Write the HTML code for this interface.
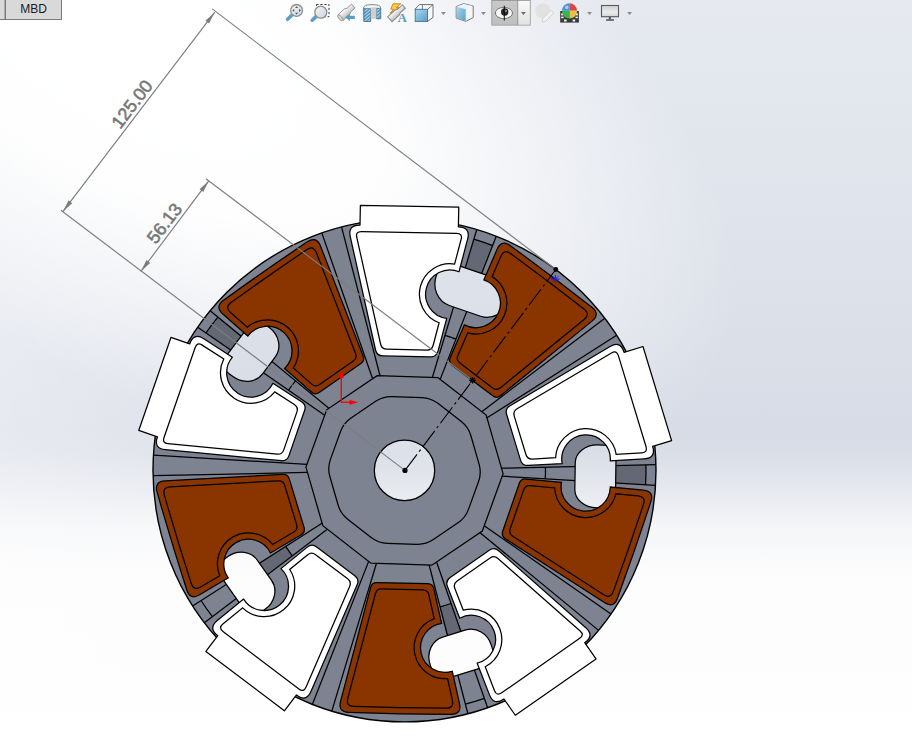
<!DOCTYPE html>
<html><head><meta charset="utf-8"><style>
html,body{margin:0;padding:0;width:912px;height:755px;overflow:hidden;background:#fff}
svg{display:block}
</style></head><body>
<svg width="912" height="755" viewBox="0 0 912 755" font-family="Liberation Sans, sans-serif">
<defs>
  <linearGradient id="bg1" gradientUnits="userSpaceOnUse" x1="0" y1="0" x2="0" y2="755">
    <stop offset="0" stop-color="#e6e9f0"/>
    <stop offset="0.3" stop-color="#dfe3eb"/>
    <stop offset="0.57" stop-color="#d8dce6"/>
    <stop offset="0.6" stop-color="#dadee7"/>
    <stop offset="0.65" stop-color="#e7e9ef"/>
    <stop offset="0.7" stop-color="#f5f6f8"/>
    <stop offset="0.76" stop-color="#fcfcfd"/>
    <stop offset="1" stop-color="#ffffff"/>
  </linearGradient>
  <linearGradient id="bg3" gradientUnits="userSpaceOnUse" x1="0" y1="0" x2="380" y2="0">
    <stop offset="0" stop-color="#ffffff" stop-opacity="0.38"/>
    <stop offset="1" stop-color="#ffffff" stop-opacity="0"/>
  </linearGradient>
  <radialGradient id="bg2" gradientUnits="userSpaceOnUse" cx="0" cy="0" r="1" gradientTransform="translate(140,50) rotate(29) scale(660,320)">
    <stop offset="0" stop-color="#ffffff" stop-opacity="1"/>
    <stop offset="0.4" stop-color="#ffffff" stop-opacity="0.97"/>
    <stop offset="0.66" stop-color="#ffffff" stop-opacity="0.55"/>
    <stop offset="1" stop-color="#ffffff" stop-opacity="0"/>
  </radialGradient>
  <radialGradient id="bg2h" gradientUnits="userSpaceOnUse" cx="0" cy="0" r="1" gradientTransform="translate(160,60) rotate(27) scale(640,270)">
    <stop offset="0" stop-color="#ffffff" stop-opacity="1"/>
    <stop offset="0.33" stop-color="#ffffff" stop-opacity="0.9"/>
    <stop offset="0.55" stop-color="#ffffff" stop-opacity="0"/>
  </radialGradient>
  <linearGradient id="holebg" x1="0" y1="0" x2="0" y2="1">
    <stop offset="0" stop-color="#e0e3eb"/><stop offset="1" stop-color="#e6e8ee"/>
  </linearGradient>
  <linearGradient id="holebg2" x1="0" y1="0" x2="0" y2="1">
    <stop offset="0" stop-color="#dfe2ea"/><stop offset="1" stop-color="#eef0f4"/>
  </linearGradient>
</defs>
<rect width="912" height="755" fill="url(#bg1)"/>
<rect width="912" height="755" fill="url(#bg2)"/>
<rect width="912" height="755" fill="url(#bg3)"/>

<defs><clipPath id="allrims"><path d="M-14.4,-211.3 L14.4,-211.3 L13.95,-205.9 A24.4,24.4 0 0 1 13.95,-157.1 L-13.95,-157.1 A24.4,24.4 0 0 1 -13.95,-205.9 Z" transform="translate(404.5,470.4) rotate(18.9)"/><path d="M-14.4,-211.3 L14.4,-211.3 L13.95,-205.9 A24.4,24.4 0 0 1 13.95,-157.1 L-13.95,-157.1 A24.4,24.4 0 0 1 -13.95,-205.9 Z" transform="translate(404.5,470.4) rotate(90.9)"/><path d="M-14.4,-211.3 L14.4,-211.3 L13.95,-205.9 A24.4,24.4 0 0 1 13.95,-157.1 L-13.95,-157.1 A24.4,24.4 0 0 1 -13.95,-205.9 Z" transform="translate(404.5,470.4) rotate(162.9)"/><path d="M-14.4,-211.3 L14.4,-211.3 L13.95,-205.9 A24.4,24.4 0 0 1 13.95,-157.1 L-13.95,-157.1 A24.4,24.4 0 0 1 -13.95,-205.9 Z" transform="translate(404.5,470.4) rotate(234.9)"/><path d="M-14.4,-211.3 L14.4,-211.3 L13.95,-205.9 A24.4,24.4 0 0 1 13.95,-157.1 L-13.95,-157.1 A24.4,24.4 0 0 1 -13.95,-205.9 Z" transform="translate(404.5,470.4) rotate(306.9)"/></clipPath><clipPath id="alllights"><path d="M-11,-220 L22,-220 A22,24 0 0 1 44,-196 L44,-194.5 A22,24 0 0 1 22,-170.5 L-11,-170.5 A22,24 0 0 1 -33,-194.5 L-33,-196 A22,24 0 0 1 -11,-220 Z" transform="translate(404.5,470.4) rotate(18.9)"/><path d="M-10.5,-220 L16.4,-220 A18,22 0 0 1 34.4,-198 L34.4,-192.6 A18,22 0 0 1 16.4,-170.6 L-10.5,-170.6 A18,22 0 0 1 -28.5,-192.6 L-28.5,-198 A18,22 0 0 1 -10.5,-220 Z" transform="translate(404.5,470.4) rotate(90.9)"/><path d="M-11.6,-220 L12.6,-220 A20,22 0 0 1 32.6,-198 L32.6,-192.5 A20,22 0 0 1 12.6,-170.5 L-11.6,-170.5 A20,22 0 0 1 -31.6,-192.5 L-31.6,-198 A20,22 0 0 1 -11.6,-220 Z" transform="translate(404.5,470.4) rotate(162.9)"/><path d="M-13.5,-220 L11,-220 A20,22 0 0 1 31,-198 L31,-194 A20,22 0 0 1 11,-172 L-13.5,-172 A20,22 0 0 1 -33.5,-194 L-33.5,-198 A20,22 0 0 1 -13.5,-220 Z" transform="translate(404.5,470.4) rotate(234.9)"/><path d="M-8,-220 L13,-220 A20,22 0 0 1 33,-198 L33,-193.5 A20,22 0 0 1 13,-171.5 L-8,-171.5 A20,22 0 0 1 -28,-193.5 L-28,-198 A20,22 0 0 1 -8,-220 Z" transform="translate(404.5,470.4) rotate(306.9)"/></clipPath><clipPath id="centerhole"><circle cx="404.5" cy="470.4" r="30.2"/></clipPath></defs>
<g transform="translate(404.5,470.4)">
  <defs>
    <clipPath id="rimclip"><path d="M-14.4,-211.3 L14.4,-211.3 L13.95,-205.9 A24.4,24.4 0 0 1 13.95,-157.1 L-13.95,-157.1 A24.4,24.4 0 0 1 -13.95,-205.9 Z"/></clipPath>
    <g id="unitA"><g stroke="#000" stroke-width="1.25" fill="none">
<line x1="26.22" y1="-93.91" x2="67.63" y2="-242.24"/><line x1="33.83" y1="-91.44" x2="87.25" y2="-235.88"/>
<line x1="-26.22" y1="-93.91" x2="-67.63" y2="-242.24"/><line x1="-33.83" y1="-91.44" x2="-87.25" y2="-235.88"/>
<path d="M64.94,-232.6 A241.5,241.5 0 0 1 83.78,-226.5" fill="none"/>
<path d="M37.92,-135.81 A141,141 0 0 1 48.92,-132.24" fill="none"/>
</g></g>
    <g id="unitB"><g transform="rotate(17.8)"><line x1="-14.4" y1="-211.3" x2="14.4" y2="-211.3" stroke="#000" stroke-width="1.25"/>
</g>
<path d="M-49.2,-264.2 L49.2,-264.2 L49.2,-244.4 Q61.56,-244.4 58.73,-232.74 L50.69,-199.69 A24.3,24.3 0 1 0 39.29,-152.85 L31.25,-119.83 Q29.84,-114 23.84,-114 L-23.84,-114 Q-29.84,-114 -31.25,-119.83 L-58.73,-232.74 Q-61.56,-244.4 -49.2,-244.4 Z" fill="#fff" stroke="#000" stroke-width="1.25" stroke-linejoin="round"/>
<path d="M-47.61,-238 L47.61,-238 Q53.61,-238 52.19,-232.17 L46.12,-207.22 A30.5,30.5 0 0 0 31.77,-148.27 L26.27,-125.66 Q25.09,-120.8 20.09,-120.8 L-20.09,-120.8 Q-25.09,-120.8 -26.27,-125.66 L-52.19,-232.17 Q-53.61,-238 -47.61,-238 Z" fill="none" stroke="#000" stroke-width="1.25"/>
<g transform="rotate(36)"><path d="M-51.09,-243.06 A3000,3000 0 0 1 51.09,-243.06 Q62.09,-242.86 59.49,-232.17 L31.6,-117.56 Q30.42,-112.7 25.42,-112.7 L-25.42,-112.7 Q-30.42,-112.7 -31.6,-117.56 L-40.04,-152.22 A24.6,24.6 0 1 0 -51.63,-199.89 L-59.49,-232.17 Q-62.09,-242.86 -51.09,-243.06 Z" fill="#8a3400" stroke="#000" stroke-width="1.25"/>
<path d="M-46.22,-236.94 A3000,3000 0 0 1 46.22,-236.94 Q54.22,-236.81 52.32,-229.04 L26.73,-123.86 Q25.55,-119 20.55,-119 L-20.55,-119 Q-25.55,-119 -26.73,-123.86 L-32.53,-147.7 A31,31 0 0 0 -47.05,-207.35 L-52.32,-229.04 Q-54.22,-236.81 -46.22,-236.94 Z" fill="none" stroke="#000" stroke-width="1.25"/></g></g>
  </defs>
  <circle r="251.5" fill="#7e8391" stroke="#000" stroke-width="1.4"/>
</g>
<g transform="translate(404.5,470.4)"><g transform="rotate(1.1)"><path d="M64.94,-232.6 A241.5,241.5 0 0 1 83.78,-226.5 L67.65,-182.89 L52.44,-187.82 Z" fill="#646874" stroke="none"/></g><g transform="rotate(73.1)"><path d="M64.94,-232.6 A241.5,241.5 0 0 1 83.78,-226.5 L67.65,-182.89 L52.44,-187.82 Z" fill="#646874" stroke="none"/></g><g transform="rotate(145.1)"><path d="M37.92,-135.81 A141,141 0 0 1 48.92,-132.24 L64.18,-173.51 L49.75,-178.19 Z" fill="#646874" stroke="none"/></g><g transform="rotate(217.1)"><path d="M37.92,-135.81 A141,141 0 0 1 48.92,-132.24 L64.18,-173.51 L49.75,-178.19 Z" fill="#646874" stroke="none"/></g><g transform="rotate(289.1)"><path d="M64.94,-232.6 A241.5,241.5 0 0 1 83.78,-226.5 L67.65,-182.89 L52.44,-187.82 Z" fill="#646874" stroke="none"/></g></g>
<g transform="translate(404.5,470.4)">
  <use href="#unitA" transform="rotate(1.1)"/>
<use href="#unitA" transform="rotate(73.1)"/>
<use href="#unitA" transform="rotate(145.1)"/>
<use href="#unitA" transform="rotate(217.1)"/>
<use href="#unitA" transform="rotate(289.1)"/>
</g>
<g clip-path="url(#allrims)"><g clip-path="url(#alllights)"><rect width="912" height="755" fill="url(#bg1)"/><rect width="912" height="755" fill="url(#bg2h)"/></g></g>
<g transform="translate(404.5,470.4)"><g transform="rotate(18.9)"><path d="M-11,-220 L22,-220 A22,24 0 0 1 44,-196 L44,-194.5 A22,24 0 0 1 22,-170.5 L-11,-170.5 A22,24 0 0 1 -33,-194.5 L-33,-196 A22,24 0 0 1 -11,-220 Z" fill="none" stroke="#000" stroke-width="1.25" clip-path="url(#rimclip)"/></g><g transform="rotate(90.9)"><path d="M-10.5,-220 L16.4,-220 A18,22 0 0 1 34.4,-198 L34.4,-192.6 A18,22 0 0 1 16.4,-170.6 L-10.5,-170.6 A18,22 0 0 1 -28.5,-192.6 L-28.5,-198 A18,22 0 0 1 -10.5,-220 Z" fill="none" stroke="#000" stroke-width="1.25" clip-path="url(#rimclip)"/></g><g transform="rotate(162.9)"><path d="M-11.6,-220 L12.6,-220 A20,22 0 0 1 32.6,-198 L32.6,-192.5 A20,22 0 0 1 12.6,-170.5 L-11.6,-170.5 A20,22 0 0 1 -31.6,-192.5 L-31.6,-198 A20,22 0 0 1 -11.6,-220 Z" fill="none" stroke="#000" stroke-width="1.25" clip-path="url(#rimclip)"/></g><g transform="rotate(234.9)"><path d="M-13.5,-220 L11,-220 A20,22 0 0 1 31,-198 L31,-194 A20,22 0 0 1 11,-172 L-13.5,-172 A20,22 0 0 1 -33.5,-194 L-33.5,-198 A20,22 0 0 1 -13.5,-220 Z" fill="none" stroke="#000" stroke-width="1.25" clip-path="url(#rimclip)"/></g><g transform="rotate(306.9)"><path d="M-8,-220 L13,-220 A20,22 0 0 1 33,-198 L33,-193.5 A20,22 0 0 1 13,-171.5 L-8,-171.5 A20,22 0 0 1 -28,-193.5 L-28,-198 A20,22 0 0 1 -8,-220 Z" fill="none" stroke="#000" stroke-width="1.25" clip-path="url(#rimclip)"/></g></g>
<g transform="translate(404.5,470.4)">
  <use href="#unitB" transform="rotate(1.1)"/>
<use href="#unitB" transform="rotate(73.1)"/>
<use href="#unitB" transform="rotate(145.1)"/>
<use href="#unitB" transform="rotate(217.1)"/>
<use href="#unitB" transform="rotate(289.1)"/>
  <g transform="rotate(1.9)">
  <path d="M30.48,-93.8 L79.79,-57.97 L98.63,-0 L79.79,57.97 L30.48,93.8 L-30.48,93.8 L-79.79,57.97 L-98.63,0 L-79.79,-57.97 L-30.48,-93.8 Z" fill="none" stroke="#000" stroke-width="1.25"/>
  <path d="M14.85,-73.4 Q23.85,-73.4 31.13,-68.11 L55.16,-50.65 Q62.44,-45.36 65.22,-36.8 L74.4,-8.56 Q77.18,-0 74.4,8.56 L65.22,36.8 Q62.44,45.36 55.16,50.65 L31.13,68.11 Q23.85,73.4 14.85,73.4 L-14.85,73.4 Q-23.85,73.4 -31.13,68.11 L-55.16,50.65 Q-62.44,45.36 -65.22,36.8 L-74.4,8.56 Q-77.18,0 -74.4,-8.56 L-65.22,-36.8 Q-62.44,-45.36 -55.16,-50.65 L-31.13,-68.11 Q-23.85,-73.4 -14.85,-73.4 Z" fill="none" stroke="#000" stroke-width="1.25"/>
  </g>
</g>
<g clip-path="url(#centerhole)"><rect width="912" height="755" fill="url(#bg1)"/><rect width="912" height="755" fill="url(#bg2)"/></g>
<circle cx="404.5" cy="470.4" r="30.2" fill="none" stroke="#000" stroke-width="1.3"/>

<g stroke="#7d7d7d" stroke-width="1.15" fill="none">
<line x1="212.2" y1="8.9" x2="555.8" y2="269.5"/>
<line x1="60.9" y1="210.3" x2="405" y2="470.4"/>
<line x1="205.9" y1="178.7" x2="472.5" y2="380.3"/>
<line x1="214.8" y1="12.2" x2="62.8" y2="211.7"/>
<line x1="208.9" y1="180.7" x2="140.8" y2="271.5"/>
</g>
<path d="M214.8,12.2 L209.05,23.54 L205.39,20.75 Z" fill="#7d7d7d"/>
<path d="M62.8,211.7 L68.55,200.36 L72.21,203.15 Z" fill="#7d7d7d"/>
<path d="M208.9,180.7 L203.24,192.08 L199.56,189.32 Z" fill="#7d7d7d"/>
<path d="M140.8,271.5 L146.46,260.12 L150.14,262.88 Z" fill="#7d7d7d"/>
<text x="0" y="0" transform="translate(136.9,107.9) rotate(-52.7)" font-size="18" fill="#777" stroke="#777" stroke-width="0.55" text-anchor="middle" font-family="Liberation Sans, sans-serif">125.00</text>
<text x="0" y="0" transform="translate(169.3,227.1) rotate(-52.7)" font-size="18" fill="#777" stroke="#777" stroke-width="0.55" text-anchor="middle" font-family="Liberation Sans, sans-serif">56.13</text>
<line x1="405" y1="470.4" x2="555.8" y2="269.5" stroke="#000" stroke-width="1.1" stroke-dasharray="20,3.5,2.5,3.5"/>
<circle cx="405" cy="470.4" r="2.6" fill="#000"/>
<circle cx="555.8" cy="269.5" r="2.4" fill="#000"/>
<g stroke="#1a1aff" stroke-width="1.0"><line x1="551.2" y1="279.1" x2="559.6" y2="279.1"/><line x1="552.43" y1="276.13" x2="558.37" y2="282.07"/><line x1="555.4" y1="274.9" x2="555.4" y2="283.3"/><line x1="558.37" y1="276.13" x2="552.43" y2="282.07"/></g>
<g stroke="#000" stroke-width="1.3"><line x1="469.3" y1="380.3" x2="475.7" y2="380.3"/><line x1="470.24" y1="378.04" x2="474.76" y2="382.56"/><line x1="472.5" y1="377.1" x2="472.5" y2="383.5"/><line x1="474.76" y1="378.04" x2="470.24" y2="382.56"/></g>
<g stroke="#ff0000" stroke-width="1.4"><line x1="341.3" y1="402.3" x2="341.3" y2="376"/><line x1="341" y1="402.3" x2="351" y2="402.3"/></g>
<path d="M341.3,369.5 L338.9,378 L343.7,378 Z" fill="#ff0000"/>
<path d="M358.2,402.3 L349.5,399.9 L349.5,404.7 Z" fill="#ff0000"/>
<!-- MBD tab -->
<rect x="-1" y="-1" width="6" height="20.5" fill="#d9d9d9" stroke="#7a7a7a" stroke-width="1"/>
<rect x="5.5" y="-1" width="56" height="20.5" fill="#d9d9d9" stroke="#7a7a7a" stroke-width="1"/>
<text x="33.5" y="13.2" font-size="12" fill="#1a1a1a" text-anchor="middle">MBD</text>
<g id="toolbar">
  <defs>
    <linearGradient id="lens" x1="0" y1="0" x2="1" y2="1"><stop offset="0" stop-color="#f4f6f8"/><stop offset="1" stop-color="#c9d2da"/></linearGradient>
    <linearGradient id="bluef" x1="0" y1="0" x2="1" y2="1"><stop offset="0" stop-color="#a9d9f2"/><stop offset="1" stop-color="#5d9cc2"/></linearGradient>
    <linearGradient id="scope" x1="0" y1="0" x2="0" y2="1"><stop offset="0" stop-color="#ffffff"/><stop offset="1" stop-color="#bdbdbd"/></linearGradient>
    <linearGradient id="btnL" x1="0" y1="0" x2="0" y2="1"><stop offset="0" stop-color="#c9c9c9"/><stop offset="1" stop-color="#bfbfbf"/></linearGradient>
    <linearGradient id="btnR" x1="0" y1="0" x2="0" y2="1"><stop offset="0" stop-color="#fafafa"/><stop offset="1" stop-color="#e2e2e2"/></linearGradient>
    <linearGradient id="mon" x1="0" y1="0" x2="0" y2="1"><stop offset="0" stop-color="#cfcfcf"/><stop offset="0.6" stop-color="#ececec"/><stop offset="1" stop-color="#d4d4d4"/></linearGradient>
    <pattern id="hatch" width="2.5" height="2.5" patternUnits="userSpaceOnUse" patternTransform="rotate(-40)"><rect width="2.5" height="2.5" fill="#4f8db5"/><rect width="2.5" height="1.1" fill="#a6dcf5"/></pattern>
  </defs>
  <!-- 1 zoom to fit -->
  <line x1="287.6" y1="19.3" x2="291.8" y2="15.3" stroke="#5b9fcb" stroke-width="3.6" stroke-linecap="round"/>
  <circle cx="296.6" cy="10.4" r="5.9" fill="url(#lens)" stroke="#8e8e8e" stroke-width="1.3"/>
  <g fill="#555">
    <path d="M296.6,6.2 l-1.6,1.8 h3.2z"/><path d="M296.6,14.6 l-1.6,-1.8 h3.2z"/>
    <path d="M292.4,10.4 l1.8,-1.6 v3.2z"/><path d="M300.8,10.4 l-1.8,-1.6 v3.2z"/>
  </g>
  <!-- 2 zoom to area -->
  <rect x="316.4" y="4.5" width="12.6" height="12.2" fill="none" stroke="#3a3a3a" stroke-width="1" stroke-dasharray="2.2,1.8"/>
  <line x1="312.2" y1="20.2" x2="316" y2="16.6" stroke="#5b9fcb" stroke-width="3.6" stroke-linecap="round"/>
  <circle cx="320.8" cy="12.2" r="6" fill="url(#lens)" stroke="#8e8e8e" stroke-width="1.3"/>
  <!-- 3 previous view -->
  <g transform="translate(347,11.8) rotate(-42)">
    <path d="M-8.5,-3.8 L0,-3.8 L2.5,-2.6 L8.5,-2.6 L8.5,2.6 L2.5,2.6 L0,3.8 L-8.5,3.8 Z" fill="url(#scope)" stroke="#8f8f8f" stroke-width="0.9"/>
    <ellipse cx="-9" cy="0" rx="1.6" ry="3.6" fill="#d8d8d8" stroke="#8a8a8a" stroke-width="0.8"/>
  </g>
  <path d="M345.2,17.3 l4.6,-3.7 v2.1 h5 v3.2 h-5 v2.1 z" fill="#5a9cc4"/>
  <!-- 4 section view -->
  <path d="M363.5,8 Q363.5,4.6 372,4.6 Q380.8,4.6 380.8,8 L380.8,18.8 L376.4,18.8 L376.4,11 Q373.5,9.4 370.7,11 L370.7,21.5 L363.8,21.5 Z" fill="#f2f2f2" stroke="#8a8a8a" stroke-width="1"/>
  <rect x="364" y="8.6" width="6.5" height="12.8" fill="url(#hatch)" stroke="#3f6e8f" stroke-width="0.6"/>
  <rect x="376.4" y="8.2" width="4.3" height="10.5" fill="url(#hatch)" stroke="#3f6e8f" stroke-width="0.6"/>
  <rect x="370.8" y="7.4" width="5.6" height="11.4" fill="#cfcfcf"/>
  <!-- 5 dynamic annotation -->
  <path d="M393,3.8 L400.8,3.8 L396.4,7.4 L399.4,7.4 L390,13.4 L393.6,9.2 L390.8,9.2 Z" fill="#f5d33a" stroke="#d8782a" stroke-width="0.9"/>
  <g transform="translate(396.5,13.2) rotate(-42)">
    <path d="M-9,-3.3 L1,-3.3 L3,-2.2 L10,-2.2 L10,2.2 L3,2.2 L1,3.3 L-9,3.3 Z" fill="url(#scope)" stroke="#8a8a8a" stroke-width="1"/>
  </g>
  <text x="402.3" y="21.8" font-size="12.5" font-weight="bold" font-family="Liberation Serif, serif" fill="#5a97c0" text-anchor="middle">A</text>
  <!-- 6 view orientation -->
  <path d="M419.2,4.6 L433,4.6 L433,17.4 L427.6,21.4 L415,9.3 Z" fill="#fafafa" stroke="#6f6f6f" stroke-width="1"/>
  <line x1="427.6" y1="9.3" x2="433" y2="4.6" stroke="#6f6f6f" stroke-width="0.9"/>
  <line x1="422.4" y1="4.6" x2="422.4" y2="9.3" stroke="#6f6f6f" stroke-width="0.9"/>
  <rect x="415.2" y="9.3" width="12.4" height="12.1" fill="url(#bluef)" stroke="#3f7397" stroke-width="0.9"/>
  <path d="M441,12 h5 l-2.5,3 z" fill="#8c8c8c"/>
  <!-- 7 display style cube -->
  <path d="M456.2,6.6 L463.6,3.6 L473.2,6 L473.2,17.6 L465.8,21.4 L456.2,18 Z" fill="#f5f5f5" stroke="#7a7a7a" stroke-width="1"/>
  <path d="M456.6,6.8 L463.6,3.9 L472.8,6.1 L466,9.2 Z" fill="#e9f3f8"/>
  <path d="M456.6,6.8 L466,9.2 L466,21 L456.6,17.8 Z" fill="url(#bluef)"/>
  <line x1="466" y1="9.2" x2="466" y2="21" stroke="#d8e8f0" stroke-width="0.8"/>
  <path d="M481,12 h5 l-2.5,3 z" fill="#8c8c8c"/>
  <!-- 8 highlighted button -->
  <rect x="491.4" y="-0.5" width="39.2" height="26" fill="#8e8e8e"/>
  <rect x="492.2" y="0.8" width="25.2" height="24" fill="url(#btnL)"/>
  <rect x="518.2" y="0.8" width="11.7" height="24" fill="url(#btnR)"/>
  <ellipse cx="503.9" cy="13" rx="8.6" ry="5.6" fill="#f7f7f7" stroke="#6a6a6a" stroke-width="0.9"/>
  <circle cx="504.7" cy="12" r="3.7" fill="#222"/>
  <circle cx="505.8" cy="11" r="1.2" fill="#888"/>
  <line x1="504.3" y1="5.8" x2="504.3" y2="20.6" stroke="#111" stroke-width="1"/>
  <path d="M520.9,12 h5 l-2.5,3 z" fill="#6c6c6c"/>
  <!-- 9 faded sphere pencil -->
  <circle cx="542.7" cy="10.8" r="7.6" fill="#e1e1e1"/>
  <g transform="translate(547.6,16.5) rotate(-45)">
    <path d="M-7.5,0 L-5,-2 L7,-2 L7,2 L-5,2 Z" fill="#f2f2f2" stroke="#d0d0d0" stroke-width="0.9"/>
  </g>
  <!-- 10 appearance -->
  <rect x="560.2" y="11" width="18.7" height="11.6" fill="#3a3a3a"/>
  <g fill="#f4f4f4"><rect x="561.2" y="13.4" width="2.4" height="2"/><rect x="575.5" y="13.4" width="2.4" height="2"/><rect x="564" y="19.5" width="2.6" height="2"/><rect x="572.6" y="19.5" width="2.6" height="2"/><rect x="561.2" y="16.6" width="2.4" height="1.6"/><rect x="575.5" y="16.6" width="2.4" height="1.6"/></g>
  <path d="M569.5,10.8 L569.5,3.2 A7.6,7.6 0 0 0 561.9,10.8 Z" fill="#4a8fdb"/>
  <path d="M569.5,10.8 L577.1,10.8 A7.6,7.6 0 0 0 569.5,3.2 Z" fill="#d9474a"/>
  <path d="M569.5,10.8 L561.9,10.8 A7.6,7.6 0 0 0 569.5,18.4 Z" fill="#3cb44b"/>
  <path d="M569.5,10.8 L569.5,18.4 A7.6,7.6 0 0 0 577.1,10.8 Z" fill="#e6c24a"/>
  <circle cx="566.8" cy="7.4" r="1.8" fill="#ffffff" opacity="0.55"/>
  <path d="M587,12 h5 l-2.5,3 z" fill="#8c8c8c"/>
  <!-- 11 monitor -->
  <rect x="601.5" y="5.5" width="17" height="11.2" fill="url(#mon)" stroke="#5a5a5a" stroke-width="1.1"/>
  <rect x="608.8" y="16.8" width="2.1" height="2.6" fill="#5a5a5a"/>
  <rect x="606.1" y="19.2" width="7.9" height="1.6" fill="#5a5a5a"/>
  <path d="M627.1,12 h5 l-2.5,3 z" fill="#8c8c8c"/>
</g>

</svg>
</body></html>
